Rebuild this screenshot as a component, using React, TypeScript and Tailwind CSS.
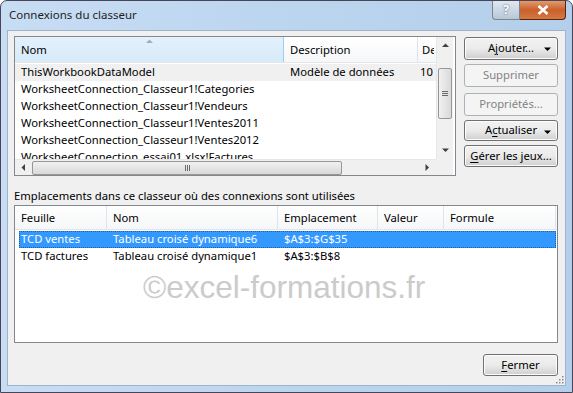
import React from "react";

type Props = {};

const topRows: string[][] = [
  ["ThisWorkbookDataModel", "Modèle de données", "10/02/2013"],
  ["WorksheetConnection_Classeur1!Categories", "", ""],
  ["WorksheetConnection_Classeur1!Vendeurs", "", ""],
  ["WorksheetConnection_Classeur1!Ventes2011", "", ""],
  ["WorksheetConnection_Classeur1!Ventes2012", "", ""],
  ["WorksheetConnection_essai01.xlsx!Factures", "", ""],
];

const bottomRows: string[][] = [
  ["TCD ventes", "Tableau croisé dynamique6", "$A$3:$G$35"],
  ["TCD factures", "Tableau croisé dynamique1", "$A$3:$B$8"],
];

function Arrow({ dir, color = "#404040" }: { dir: "up" | "down" | "left" | "right"; color?: string }) {
  const pts = {
    up: "0,4 3.5,0.5 7,4",
    down: "0,0.5 3.5,4 7,0.5",
    left: "4,0 0.5,3.5 4,7",
    right: "0.5,0 4,3.5 0.5,7",
  }[dir];
  const horiz = dir === "up" || dir === "down";
  return (
    <svg width={horiz ? 7 : 5} height={horiz ? 5 : 7} viewBox={horiz ? "0 0 7 5" : "0 0 5 7"}>
      <polygon points={pts} fill={color} />
    </svg>
  );
}

function Btn({ label, u, disabled, drop, w = "w-[94px]", h = "h-[23px]" }: any) {
  const before = u !== undefined ? label.slice(0, u) : label;
  const ch = u !== undefined ? label[u] : "";
  const after = u !== undefined ? label.slice(u + 1) : "";
  return (
    <div
      className={
        `${w} ${h} relative flex items-center justify-center rounded-[3px] border ` +
        (disabled
          ? "border-[#adb2b5] bg-[#f4f4f4] text-[#838383]"
          : "border-[#707070] bg-gradient-to-b from-[#f2f2f2] via-[#ebebeb] to-[#cfcfcf] text-black shadow-[inset_0_0_0_1px_#fcfcfc]")
      }
    >
      <span>
        {before}
        {ch && <span className="underline underline-offset-2">{ch}</span>}
        {after}
      </span>
      {drop && (
        <span className="absolute right-[6px] top-[9px]">
          <Arrow dir="down" color="#000" />
        </span>
      )}
    </div>
  );
}

function Grip({ vertical }: { vertical?: boolean }) {
  return (
    <div className={vertical ? "flex flex-col gap-[1px]" : "flex gap-[1px]"}>
      {[0, 1, 2].map((i) => (
        <div key={i} className={vertical ? "w-[6px] h-[1px] bg-[#6b6b6b]" : "w-[1px] h-[6px] bg-[#6b6b6b]"} />
      ))}
    </div>
  );
}

export default function App({}: Props) {
  return (
    <div className="w-[573px] h-[393px] font-['Segoe_UI','Noto_Sans',sans-serif] text-[11.25px] text-black bg-white">
      <div className="w-full h-full flex flex-col rounded-t-[7px] border border-[#4a4459] bg-gradient-to-r from-[#c7ddf4] via-[#bcd5ef] to-[#b4cfeb] px-[6px] pb-[6px]">
        {/* title bar */}
        <div className="h-[29px] flex items-start justify-between">
          <div className="pt-[5px] pl-[2px] text-[11.5px] text-[#1e1e1e]">Connexions du classeur</div>
          <div className="flex">
            <div className="w-[28px] h-[19px] flex items-center justify-center rounded-bl-[4px] border border-t-0 border-[#7a8594] bg-gradient-to-b from-[#dfe8f2] to-[#b9c7d6] text-white font-bold text-[12px] [text-shadow:0_0_2px_#40506a]">
              ?
            </div>
            <div className="w-[46px] h-[19px] flex items-center justify-center rounded-br-[4px] border border-t-0 border-l-0 border-[#5a2210] bg-gradient-to-b from-[#e39a6c] via-[#c9602c] to-[#d4793e]">
              <svg width="12" height="10" viewBox="0 0 12 10">
                <path d="M1.5 1 L10.5 9 M10.5 1 L1.5 9" stroke="#fff" strokeWidth="2.6" />
              </svg>
            </div>
          </div>
        </div>

        {/* client */}
        <div className="flex-1 relative flex flex-col bg-[#f0f0f0] border border-[#a0b3c9] pl-[6px] pr-[7px] pt-[5px]">
          <div className="flex gap-[8px]">
            {/* top list */}
            <div className="w-[442px] h-[140px] border border-[#828790] bg-white flex flex-col">
              <div className="flex flex-1 min-h-0">
                <div className="w-[421px] overflow-hidden flex flex-col">
                  <div className="h-[26px] flex shrink-0 border-b border-[#e5e5e5]">
                    <div className="relative w-[269px] shrink-0 flex items-center pl-[6px] pt-[1px] bg-gradient-to-b from-[#e3f1fc] to-[#d6eaf8] border-r border-[#a6cbe8]">
                      Nom
                      <span className="absolute left-[131px] top-[2px]">
                        <Arrow dir="up" color="#9bb0c4" />
                      </span>
                    </div>
                    <div className="w-[134px] shrink-0 flex items-center pl-[6px] pt-[1px] bg-gradient-to-b from-white to-[#f6f7f9] border-r border-[#e0e4e8]">
                      Description
                    </div>
                    <div className="w-[18px] shrink-0 overflow-hidden flex items-center pl-[4px] pt-[1px] bg-gradient-to-b from-white to-[#f6f7f9]">
                      <span className="w-[12px] overflow-hidden whitespace-nowrap">De</span>
                    </div>
                  </div>
                  <div className="flex-1 overflow-hidden pt-[1px]">
                    {topRows.map((r, i) => (
                      <div key={i} className={"h-[17px] flex items-center whitespace-nowrap " + (i === 0 ? "bg-[#f0f0f0]" : "")}>
                        <div className="w-[269px] shrink-0 pl-[6px] overflow-hidden">{r[0]}</div>
                        <div className="w-[134px] shrink-0 pl-[6px]">{r[1]}</div>
                        <div className="w-[18px] shrink-0 pl-[2px] overflow-hidden">{r[2] ? "10" : ""}</div>
                      </div>
                    ))}
                  </div>
                </div>
                {/* vertical scrollbar */}
                <div className="w-[17px] flex flex-col bg-[#f0f0f0] border-l border-[#e6e6e6]">
                  <div className="h-[17px] flex items-center justify-center">
                    <Arrow dir="up" />
                  </div>
                  <div className="h-[14px]" />
                  <div className="mx-[1px] h-[51px] rounded-[2px] border border-[#979797] bg-gradient-to-r from-[#f1f1f1] to-[#d9d9d9] flex items-center justify-center">
                    <Grip vertical />
                  </div>
                  <div className="flex-1" />
                  <div className="h-[17px] flex items-center justify-center">
                    <Arrow dir="down" />
                  </div>
                </div>
              </div>
              {/* horizontal scrollbar */}
              <div className="h-[16px] flex shrink-0">
                <div className="w-[421px] flex items-center bg-[#f0f0f0] border-t border-[#e6e6e6]">
                  <div className="w-[17px] h-full flex items-center justify-center">
                    <Arrow dir="left" />
                  </div>
                  <div className="w-[310px] h-[14px] rounded-[2px] border border-[#979797] bg-gradient-to-b from-[#f1f1f1] to-[#d9d9d9] flex items-center justify-center">
                    <Grip />
                  </div>
                  <div className="flex-1" />
                  <div className="w-[17px] h-full flex items-center justify-center">
                    <Arrow dir="right" />
                  </div>
                </div>
                <div className="w-[17px] bg-[#f0f0f0]" />
              </div>
            </div>

            {/* buttons */}
            <div className="flex flex-col pt-[1px]">
              <Btn label="Ajouter..." u={1} drop />
              <div className="h-[4px]" />
              <Btn label="Supprimer" disabled />
              <div className="h-[6px]" />
              <Btn label="Propriétés..." disabled />
              <div className="h-[4px]" />
              <Btn label="Actualiser" u={1} drop h="h-[21px]" />
              <div className="h-[4px]" />
              <Btn label="Gérer les jeux..." u={0} h="h-[22px]" />
            </div>
          </div>

          <div className="mt-[11px] h-[16px] leading-[16px] pt-[1px]">
            Emplacements dans ce classeur où des connexions sont utilisées
          </div>

          {/* bottom list */}
          <div className="relative mt-[2px] w-[544px] h-[138px] border border-[#828790] bg-white flex flex-col">
            <div className="h-[24px] flex shrink-0 bg-gradient-to-b from-white to-[#f5f6f8] border-b border-[#e5e5e5]">
              <div className="w-[92px] flex items-center pl-[6px] pt-[1px] border-r border-[#e0e4e8]">Feuille</div>
              <div className="w-[171px] flex items-center pl-[6px] pt-[1px] border-r border-[#e0e4e8]">Nom</div>
              <div className="w-[100px] flex items-center pl-[6px] pt-[1px] border-r border-[#e0e4e8]">Emplacement</div>
              <div className="w-[66px] flex items-center pl-[6px] pt-[1px] border-r border-[#e0e4e8]">Valeur</div>
              <div className="w-[112px] flex items-center pl-[6px] pt-[1px] border-r border-[#e0e4e8]">Formule</div>
            </div>
            <div className="pt-[1px] pl-[4px] pr-[1px]">
              {bottomRows.map((r, i) => (
                <div
                  key={i}
                  className={
                    "h-[17px] flex items-center whitespace-nowrap " +
                    (i === 0 ? "bg-[#3399ff] text-white outline outline-1 outline-dotted outline-[#1c5fa8] -outline-offset-1" : "")
                  }
                >
                  <div className="w-[88px] shrink-0 pl-[2px]">{r[0]}</div>
                  <div className="w-[171px] shrink-0 pl-[6px]">{r[1]}</div>
                  <div className="w-[100px] shrink-0 pl-[6px]">{r[2]}</div>
                </div>
              ))}
            </div>
            <div className="absolute left-[128px] top-[63px] font-['Liberation_Sans',Arial,sans-serif] text-[31.5px] leading-[36px] text-[#cbcbcb] whitespace-nowrap">
              ©excel-formations.fr
            </div>
          </div>

          <div className="flex justify-end mt-[11px]">
            <Btn label="Fermer" u={0} w="w-[75px]" h="h-[22px]" />
          </div>

          <svg className="absolute right-[1px] bottom-[1px]" width="10" height="10" viewBox="0 0 10 10">
            {[
              [8, 2], [8, 5], [5, 5], [8, 8], [5, 8], [2, 8],
            ].map(([x, y], i) => (
              <rect key={i} x={x} y={y} width="1.5" height="1.5" fill="#8a8a8a" />
            ))}
          </svg>
        </div>
      </div>
    </div>
  );
}
